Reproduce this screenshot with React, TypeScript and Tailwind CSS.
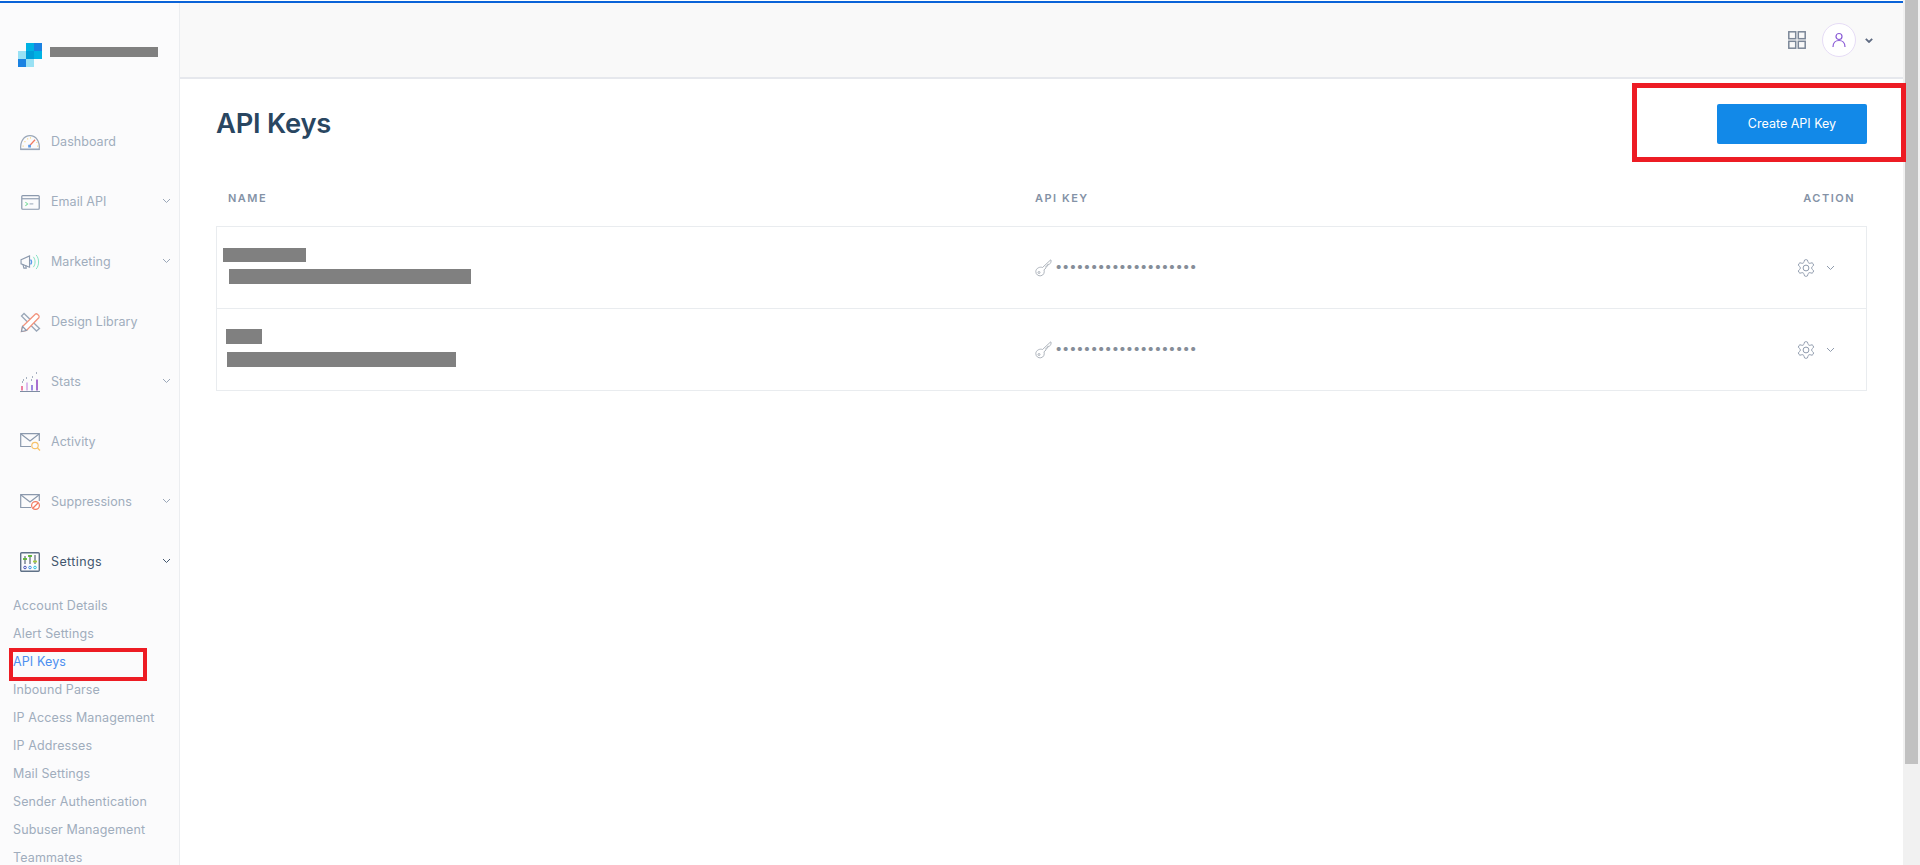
import React from "react";

const F = "font-['Inter','Liberation_Sans',sans-serif]";

function Chev({ className = "" }: { className?: string }) {
  return (
    <svg width="9" height="6" viewBox="0 0 9 6" fill="none" className={className}>
      <path d="M1 1l3.5 3.5L8 1" stroke="currentColor" strokeWidth="1" />
    </svg>
  );
}

function Dash() {
  return (
    <svg width="22" height="17" viewBox="0 0 24 18" fill="none">
      <path d="M2 16.5C.8 8 5.500 1.500 12 1.500S23.200 8 22 16.500z" stroke="#9aa7b8" strokeWidth="1.300" />
      <path d="M1.500 16.500h21" stroke="#9aa7b8" strokeWidth="1.600" />
      <path d="M12 12l5.500-6" stroke="#f2795f" strokeWidth="1.300" />
      <rect x="10" y="11.500" width="3" height="3" fill="#5b9be8" />
      <path d="M4 13h1M6 8h1M9 5h1M12 4h1M19 9h1M20 13h1" stroke="#f5cf6c" strokeWidth="1.200" />
    </svg>
  );
}
function Term() {
  return (
    <svg width="19" height="15" viewBox="0 0 20 16" fill="none">
      <rect x=".7" y=".7" width="18.600" height="14.500" rx="1" stroke="#8b99ad" strokeWidth="1.300" />
      <path d="M1 4h18" stroke="#8b99ad" strokeWidth="1.200" />
      <path d="M4.500 7.500l2.500 2-2.500 2" stroke="#7ddc9e" strokeWidth="1.100" />
      <path d="M9 9.500h4" stroke="#9aa7b8" strokeWidth="1.100" />
    </svg>
  );
}
function Mega() {
  return (
    <svg width="20" height="16" viewBox="0 0 21 17" fill="none">
      <path d="M1 6l9-4v12L1 10.500z" stroke="#8b99ad" strokeWidth="1.200" />
      <path d="M3 11l1 4h2.500L6 12" stroke="#8b99ad" strokeWidth="1.200" />
      <path d="M11 6c1.500 1 1.500 4 0 5" stroke="#5b9be8" strokeWidth="1.500" />
      <path d="M14 3c2.500 3 2.500 8 0 11" stroke="#7fe0c0" strokeWidth="1" />
      <path d="M17 1c3.500 4 3.500 11 0 15" stroke="#7fe0c0" strokeWidth="1" />
    </svg>
  );
}
function Design() {
  return (
    <svg width="21" height="21" viewBox="0 0 21 21" fill="none">
      <path d="M4 1.500L1.500 4l15 15 3-2.500z" stroke="#9aa7b8" strokeWidth="1.300" />
      <path d="M1.500 19.500l1-5L15.500 2c1-1 4.500 2 3.500 3.500L6.500 18.500z" fill="#fff" stroke="#f2937c" strokeWidth="1.300" />
      <path d="M1.500 19.500l1-5 4 4z" fill="#fff" stroke="#8b99ad" strokeWidth="1.200" />
    </svg>
  );
}
function Stats() {
  return (
    <svg width="21" height="20" viewBox="0 0 21 20" fill="none">
      <rect x="1" y="14" width="2" height="4.500" fill="#ee7fa2" />
      <rect x="6" y="10.500" width="2" height="8" fill="#dcb9ec" />
      <rect x="11" y="13" width="2" height="5.500" fill="#9b8ae0" />
      <rect x="16" y="7.500" width="2" height="11" fill="#a86fd0" />
      <path d="M0 19.500h20" stroke="#7e8ca3" strokeWidth="1" />
      <path d="M2 10h1M6 6h1M11 8h1M16 1h1M3 8h1M12 5h1" stroke="#8b99ad" strokeWidth="1.500" />
    </svg>
  );
}
function Act() {
  return (
    <svg width="21" height="18" viewBox="0 0 21 18" fill="none">
      <path d="M11 13.500H.7V.7h18.600V8" stroke="#8b99ad" strokeWidth="1.200" />
      <path d="M1 1l9 7 9-7" stroke="#8b99ad" strokeWidth="1.200" />
      <circle cx="15" cy="12.500" r="3.200" stroke="#f7c26b" strokeWidth="1.200" />
      <path d="M17.500 15l2.500 2.500" stroke="#f7c26b" strokeWidth="1.200" />
    </svg>
  );
}
function Supp() {
  return (
    <svg width="21" height="17" viewBox="0 0 21 17" fill="none">
      <path d="M11 13.500H.7V.7h18.600V7" stroke="#8b99ad" strokeWidth="1.200" />
      <path d="M1 1l9 7 9-7" stroke="#8b99ad" strokeWidth="1.200" />
      <circle cx="15.500" cy="11.500" r="3.900" fill="#fff" stroke="#f2795f" strokeWidth="1.200" />
      <path d="M13 14l5-5" stroke="#f2795f" strokeWidth="1.200" />
    </svg>
  );
}
function Sett() {
  return (
    <svg width="20" height="20" viewBox="0 0 20 20" fill="none">
      <rect x=".7" y=".7" width="18.600" height="18.600" rx="1" stroke="#5f7187" strokeWidth="1.400" />
      <path d="M5 4v8M10 3v9M15 3v9" stroke="#3b4a5e" strokeWidth="1" />
      <path d="M3 7h4" stroke="#5cb531" strokeWidth="1.800" />
      <path d="M8 4h4" stroke="#5cb531" strokeWidth="1.800" />
      <path d="M13 9.500h4" stroke="#a6cc3a" strokeWidth="1.800" />
      <circle cx="5" cy="15.500" r="1.300" stroke="#4450b8" />
      <circle cx="10" cy="15.500" r="1.300" stroke="#3f8ee0" />
      <circle cx="15" cy="15.500" r="1.300" stroke="#2bc3dd" />
    </svg>
  );
}
function Key() {
  return (
    <svg width="17" height="18" viewBox="0 0 17 18" fill="none">
      <path d="M15.500 1l-8 7.500C5 7.500 1 9 .8 12.500c0 3 2.500 4.700 5 4.300 3-.5 4-3.500 3.200-6l2-1.800V7h1.700V5.400h1.400L16 3.500V1z" stroke="#9aa2ac" strokeWidth=".8" fill="none" />
      <circle cx="4" cy="13.500" r="1" stroke="#9aa2ac" strokeWidth=".8" />
    </svg>
  );
}
function Gear() {
  return (
    <svg width="20" height="20" viewBox="0 0 24 24" fill="none" stroke="#8f9bad" strokeWidth="1.200">
      <path d="M12.220 2h-.44a2 2 0 0 0-2 2v.18a2 2 0 0 1-1 1.730l-.43.25a2 2 0 0 1-2 0l-.15-.08a2 2 0 0 0-2.730.730l-.22.380a2 2 0 0 0 .730 2.730l.15.100a2 2 0 0 1 1 1.720v.510a2 2 0 0 1-1 1.740l-.15.090a2 2 0 0 0-.730 2.730l.22.380a2 2 0 0 0 2.730.730l.15-.08a2 2 0 0 1 2 0l.43.250a2 2 0 0 1 1 1.730V20a2 2 0 0 0 2 2h.44a2 2 0 0 0 2-2v-.18a2 2 0 0 1 1-1.730l.43-.25a2 2 0 0 1 2 0l.15.080a2 2 0 0 0 2.730-.730l.22-.390a2 2 0 0 0-.730-2.730l-.15-.080a2 2 0 0 1-1-1.740v-.500a2 2 0 0 1 1-1.740l.15-.090a2 2 0 0 0 .730-2.730l-.22-.380a2 2 0 0 0-2.730-.730l-.15.080a2 2 0 0 1-2 0l-.43-.250a2 2 0 0 1-1-1.730V4a2 2 0 0 0-2-2z" />
      <circle cx="12" cy="12" r="3.500" />
    </svg>
  );
}

const nav: [string, React.ReactNode, boolean][] = [
  ["Dashboard", <Dash />, false],
  ["Email API", <Term />, true],
  ["Marketing", <Mega />, true],
  ["Design Library", <Design />, false],
  ["Stats", <Stats />, true],
  ["Activity", <Act />, false],
  ["Suppressions", <Supp />, true],
];

const subs = [
  "Account Details",
  "Alert Settings",
  "API Keys",
  "Inbound Parse",
  "IP Access Management",
  "IP Addresses",
  "Mail Settings",
  "Sender Authentication",
  "Subuser Management",
  "Teammates",
];

function Row({ rowClass, stack, a, gap, b }: { rowClass: string; stack: string; a: string; gap: string; b: string }) {
  return (
    <div className={`flex items-center ${rowClass}`}>
      <div className={`flex w-[818px] flex-col ${stack}`}>
        <div className={`bg-[#808080] ${a}`} />
        <div className={`h-[15px] bg-[#808080] ${gap} ${b}`} />
      </div>
      <div className="flex items-center">
        <Key />
        <span className="ml-[3px] -translate-y-[1px] text-[13px] leading-none tracking-[-0.23px] text-[#858d98]">
          {"••••••••••••••••••••"}
        </span>
      </div>
      <div className="ml-auto mr-[31px] flex items-center gap-[10px] text-[#8f9bad]">
        <Gear />
        <Chev />
      </div>
    </div>
  );
}

export default function App() {
  return (
    <div className={`${F} relative flex h-[865px] w-[1920px] overflow-hidden bg-white`}>
      <div className="flex h-full min-w-0 flex-1 flex-col">
        <div className="mt-px h-[2px] shrink-0 bg-[#0a63d8]" />
        <div className="flex min-h-0 flex-1">
          <aside className="flex w-[180px] shrink-0 flex-col overflow-hidden border-r border-[#ebedf0] bg-[#fbfbfc]">
            <div className="flex h-[64px] shrink-0 items-end pl-[18px]">
              <div className="grid grid-cols-3 grid-rows-3">
                <span className="size-[8px]" />
                <span className="size-[8px] bg-[#00b2e3]" />
                <span className="size-[8px] bg-[#1a82e2]" />
                <span className="size-[8px] bg-[#99e1f4]" />
                <span className="size-[8px] bg-[#009dd9]" />
                <span className="size-[8px] bg-[#00b2e3]" />
                <span className="size-[8px] bg-[#1a82e2]" />
                <span className="size-[8px] bg-[#99e1f4]" />
                <span className="size-[8px]" />
              </div>
              <div className="mb-[10px] ml-[8px] h-[10px] w-[108px] bg-[#808080]" />
            </div>
            <nav className="mt-[45px] flex shrink-0 flex-col">
              {nav.map(([label, icon, chev]) => (
                <div key={label} className="flex h-[60px] items-center text-[12.500px] tracking-[0.05px] text-[#a0adbd]">
                  <span className="flex w-[51px] shrink-0 justify-center pl-[14px] pr-[5px]">{icon}</span>
                  <span>{label}</span>
                  {chev && <Chev className="ml-auto mr-[8px] -translate-y-[1px] text-[#9aa7b8]" />}
                </div>
              ))}
              <div className="flex h-[60px] items-center text-[12.500px] tracking-[0.4px] text-[#42566e]">
                <span className="flex w-[51px] shrink-0 justify-center pl-[14px] pr-[5px]">
                  <Sett />
                </span>
                <span>Settings</span>
                <Chev className="ml-auto mr-[8px] -translate-y-[1px] text-[#42566e]" />
              </div>
            </nav>
            <div className="flex shrink-0 flex-col pl-[13px]">
              {subs.map((s) => (
                <div
                  key={s}
                  className={`flex h-[28px] items-center text-[12.500px] tracking-[0.12px] ${
                    s === "API Keys" ? "text-[#4c8ff0]" : "text-[#a0adbd]"
                  }`}
                >
                  {s}
                </div>
              ))}
            </div>
          </aside>
          <main className="flex min-w-0 flex-1 flex-col">
            <header className="flex h-[76px] shrink-0 items-center justify-end border-b-2 border-[#e6e8ed] bg-[#f9f9f9] pr-[30px]">
              <svg width="18" height="18" viewBox="0 0 18 18" fill="none" stroke="#7b8798" strokeWidth="1.500">
                <rect x=".8" y=".8" width="6.900" height="6.900" />
                <rect x="10.300" y=".8" width="6.900" height="6.900" />
                <rect x=".8" y="10.300" width="6.900" height="6.900" />
                <rect x="10.300" y="10.300" width="6.900" height="6.900" />
              </svg>
              <div className="ml-[16px] flex size-[34px] items-center justify-center rounded-full border border-[#e6dcf6] bg-white">
                <svg width="14" height="16" viewBox="0 0 14 16" fill="none" stroke="#8a5bd6" strokeWidth="1.200">
                  <circle cx="7" cy="4.500" r="3" />
                  <path d="M1 15c0-4 2.500-6.500 6-6.500s6 2.500 6 6.500" />
                </svg>
              </div>
              <svg width="8" height="5" viewBox="0 0 8 5" fill="none" className="ml-[9px]" stroke="#5f6b82" strokeWidth="1.800">
                <path d="M.8.8L4 4l3.200-3.200" />
              </svg>
            </header>
            <div className="flex min-h-0 flex-1 flex-col px-[36px]">
              <div className="flex h-[65px] shrink-0 items-start justify-between pt-[25px]">
                <h1 className="mt-[2px] text-[27.300px] leading-[36px] font-semibold tracking-[-0.2px] text-[#294661]">API Keys</h1>
                <button className="h-[40px] w-[150px] rounded-[2px] bg-[#1289e8] text-[12.500px] text-white">
                  Create API Key
                </button>
              </div>
              <div className="flex h-[82px] shrink-0 items-center pt-[26px] text-[11px] leading-none font-semibold tracking-[1.500px] text-[#8492a6]">
                <span className="w-[819px] pl-[12px]">NAME</span>
                <span>API KEY</span>
                <span className="ml-auto pr-[12px]">ACTION</span>
              </div>
              <div className="shrink-0 border border-[#e9ecef]">
                <Row rowClass="h-[82px] border-b border-[#e9ecef]" stack="-mt-[3px]" a="h-[14px] w-[83px] ml-[6px]" gap="mt-[7px]" b="w-[242px] ml-[12px]" />
                <Row rowClass="h-[81px]" stack="-mt-[3px]" a="h-[15px] w-[36px] ml-[9px]" gap="mt-[8px]" b="w-[229px] ml-[10px]" />
              </div>
            </div>
          </main>
        </div>
      </div>
      <div className="flex w-[17px] shrink-0 justify-center bg-[#f1f1f1]">
        <div className="h-[764px] w-[13px] bg-[#c1c1c1]" />
      </div>
      <div className="pointer-events-none absolute left-[9px] top-[648px] h-[33px] w-[138px] border-[4.500px] border-[#ed1c24]" />
      <div className="pointer-events-none absolute left-[1632px] top-[83px] h-[79px] w-[274px] border-[5px] border-[#ed1c24]" />
    </div>
  );
}
